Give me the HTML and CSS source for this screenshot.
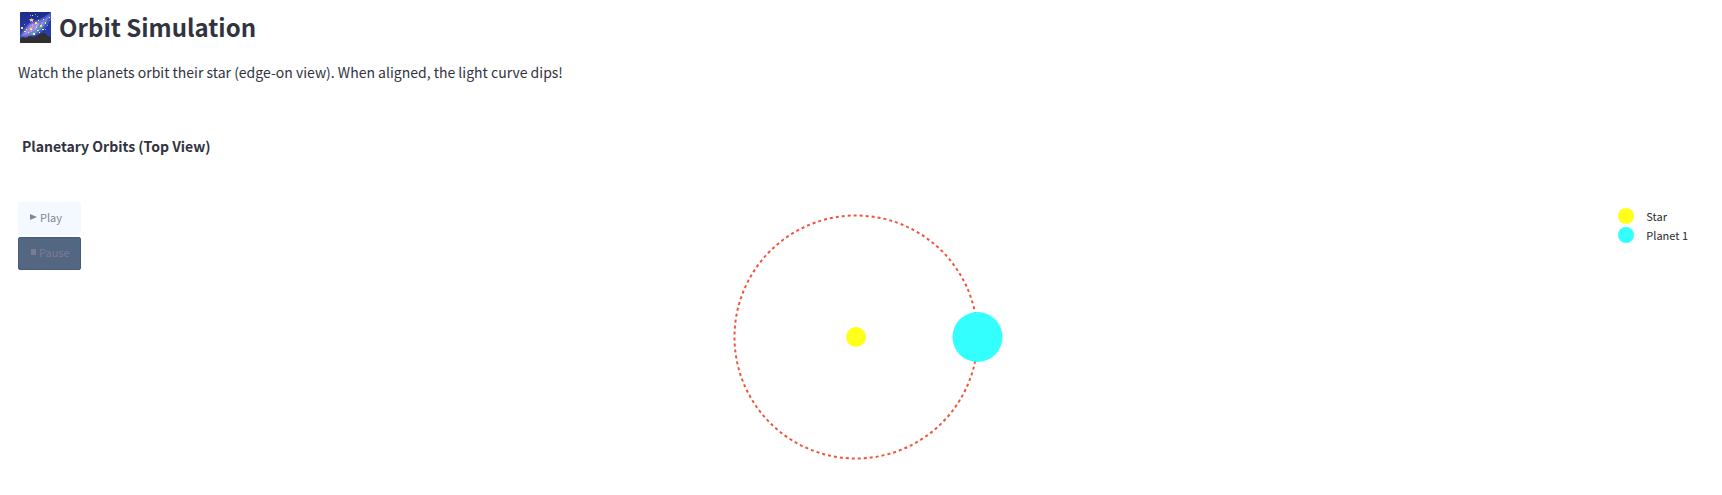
FILE: index.html
```html
<!DOCTYPE html>
<html lang="en">
<head>
<meta charset="utf-8">
<title>Orbit Simulation</title>
<link rel="stylesheet" href="styles.css">
</head>
<body>
<main class="page">
  <h1 class="title">
    <svg class="galaxy" viewBox="0 0 31 31" aria-hidden="true">
      <defs>
        <clipPath id="tile"><rect width="31" height="31" rx="1"/></clipPath>
        <linearGradient id="sky" x1="0" y1="0" x2="0" y2="1"><stop offset="0" stop-color="#1d2c86"/><stop offset="1" stop-color="#2c46c4"/></linearGradient>
      </defs>
      <g clip-path="url(#tile)">
        <rect width="31" height="31" fill="url(#sky)"/>
        <path d="M0 23C4 16 9 9 16 8C22 7 27 3 31 0V8C27 14 22 22 14 24C9 26 3 27 0 27Z" fill="#4a56c0"/>
        <path d="M1 24C5 18 8 11 15 10C21 9 26 6 30 3C27 11 20 18 14 22C9 24 5 25 1 24Z" fill="#6f78d6"/>
        <path d="M3 23C7 20 8 14 12 12C15 11 17 13 20 11C18 16 13 21 3 23Z" fill="#a48be0"/>
        <path d="M6 23C12 22 16 17 20 14C23 12 27 9 28 7C25 14 19 20 13 23Z" fill="#4f9bd0"/>
        <path d="M11 20L13 12M15 18L18 11M20 15L23 10" stroke="#c5a4ea" fill="none"/>
        <path d="M0 31V26L3 25L6 26L10 24L14 25L18 23L22 21L25 21L28 24L31 25V31Z" fill="#303033"/>
        <path d="M11 6l1 1h2l-1 1v2l-2-1-1 1v-2l-1-1h2z" fill="#ffb9a6"/>
        <path d="M1 15h2v2H1zM15 10h2v2h-2zM10 16h2v2h-2zM20 13h2v2h-2zM8 20h1v1H8zM4 19h2v1H4zM25 10h1v2h-1zM17 18h2v1h-2z" fill="#ffe75a"/>
        <path d="M13 21h2v2h-2zM6 17h1v1H6zM18 8h1v1h-1zM23 7h1v1h-1zM22 17h2v1h-2zM16 15h1v1h-1zM29 5h1v1h-1zM12 3h1v1h-1zM19 20h1v1h-1z" fill="#fff3c2"/>
        <path d="M10 3h1v1h-1zM15 2h1v1h-1zM17 4h1v1h-1zM27 13h1v1h-1zM25 17h1v1h-1zM4 12h1v1H4z" fill="#7e9cf0"/>
      </g>
    </svg>
    <span>Orbit Simulation</span>
  </h1>
  <p class="intro">Watch the planets orbit their star (edge-on view). When aligned, the light curve dips!</p>
  <section class="chart">
    <h2 class="chart-title">Planetary Orbits (Top View)</h2>
    <div class="plot">
      <div class="controls">
        <button class="control" type="button"><svg class="glyph" viewBox="0 0 7 6" aria-hidden="true"><path d="M0 0L7 3L0 6Z"/></svg>Play</button>
        <button class="control control-active" type="button"><svg class="glyph glyph-stop" viewBox="0 0 5 6" aria-hidden="true"><path d="M0 0H5V6H0Z"/></svg>Pause</button>
      </div>
      <svg class="orbits" viewBox="0 0 320 270" role="img" aria-label="Planet 1 orbiting its star">
        <circle class="orbit" cx="163" cy="135" r="121.5"/>
        <circle class="star" cx="163" cy="135" r="10"/>
        <circle class="planet" cx="284.5" cy="135" r="25"/>
      </svg>
      <ul class="legend">
        <li class="legend-item"><svg class="swatch" viewBox="0 0 16 16" aria-hidden="true"><circle class="star" cx="8" cy="8" r="8"/></svg>Star</li>
        <li class="legend-item"><svg class="swatch" viewBox="0 0 16 16" aria-hidden="true"><circle class="planet" cx="8" cy="8" r="8"/></svg>Planet 1</li>
      </ul>
    </div>
  </section>
</main>
</body>
</html>
```
FILE: styles.css
```css
* { box-sizing: border-box; }
body {
  margin: 0;
  background: #fff;
  color: #31333f;
  font-family: "Noto Sans CJK SC", "Noto Sans", sans-serif;
}
.page { padding: 8px 34px 23px 18px; }
.title {
  display: flex;
  align-items: center;
  gap: 8px;
  margin: 0;
  padding-left: 2px;
  font-size: 24px;
  font-weight: 600;
  line-height: 38px;
}
.galaxy { width: 31px; height: 31px; }
.intro {
  margin: 14px 0 0;
  font-size: 14px;
  line-height: 24px;
}
.chart { margin-top: 50px; }
.chart-title {
  margin: 0;
  padding-left: 4px;
  font-size: 14px;
  font-weight: 700;
  line-height: 24px;
}
.plot {
  display: grid;
  grid-template-columns: 1fr 320px 1fr;
  align-items: start;
  margin-top: 44px;
}
.controls {
  display: flex;
  flex-direction: column;
  gap: 2px;
  width: 63px;
}
.control {
  display: flex;
  align-items: center;
  gap: 3px;
  height: 33px;
  padding: 0 0 3px 12px;
  border: 0;
  border-radius: 2px;
  background: #f4f9ff;
  color: #838690;
  font-family: inherit;
  font-size: 11px;
}
.control-active {
  border: 1px solid #475c7c;
  background: #536682;
  color: #7b7d8d;
}
.glyph { width: 7px; height: 6px; fill: currentColor; }
.glyph-stop { width: 5px; height: 6px; }
.orbits { display: block; width: 100%; height: 270px; }
.orbit { fill: none; stroke: #ef553b; stroke-width: 2; stroke-dasharray: 3 3; }
.star { fill: #ffff19; }
.planet { fill: #33ffff; }
.legend {
  justify-self: end;
  margin: 0;
  padding: 4px 0 0;
  list-style: none;
  color: #2a2a2a;
  font-size: 11px;
}
.legend-item {
  display: flex;
  align-items: center;
  gap: 12px;
  height: 19px;
}
.swatch { width: 16px; height: 16px; }
```
